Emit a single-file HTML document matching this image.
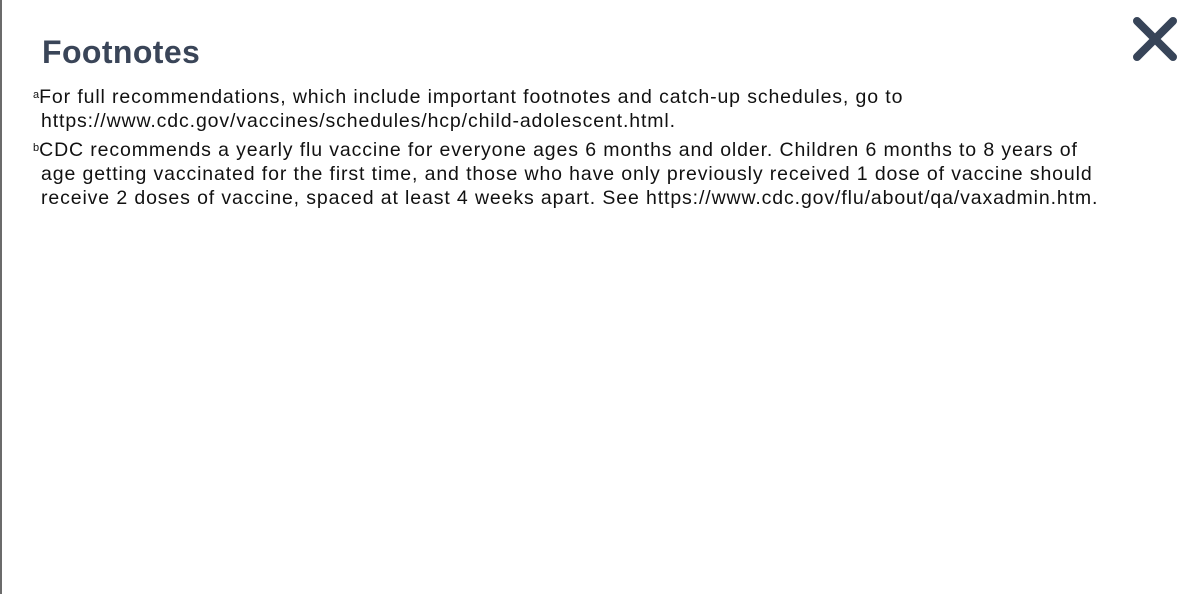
<!DOCTYPE html>
<html><head><style>
html,body{margin:0;padding:0;background:#fff;width:1196px;height:594px;overflow:hidden;}
body{border-left:2px solid #6b6b6b;box-sizing:border-box;position:relative;font-family:"Liberation Sans",sans-serif;}
h1{position:absolute;left:40px;top:34px;margin:0;font-size:32px;font-weight:bold;color:#3a4558;line-height:36px;letter-spacing:0.4px;}
.p{position:absolute;left:31px;margin:0;font-size:19.5px;line-height:24px;color:#111;width:1150px;letter-spacing:0.88px;white-space:nowrap;}
.p sup{font-size:11px;vertical-align:top;line-height:14px;position:relative;top:3px;letter-spacing:0;}
.ind{padding-left:8px;}
</style></head><body>
<h1>Footnotes</h1>
<div class="p" style="top:85px"><sup>a</sup>For full recommendations, which include important footnotes and catch-up schedules, go to<br><span class="ind">https://www.cdc.gov/vaccines/schedules/hcp/child-adolescent.html.</span></div>
<div class="p" style="top:138px"><sup>b</sup>CDC recommends a yearly flu vaccine for everyone ages 6 months and older. Children 6 months to 8 years of<br><span class="ind">age getting vaccinated for the first time, and those who have only previously received 1 dose of vaccine should</span><br><span class="ind">receive 2 doses of vaccine, spaced at least 4 weeks apart. See https://www.cdc.gov/flu/about/qa/vaxadmin.htm.</span></div>
<svg style="position:absolute;left:1128px;top:14px" width="50" height="50" viewBox="0 0 50 50"><path d="M7 7L43 43M43 7L7 43" stroke="#374458" stroke-width="8" stroke-linecap="round"/></svg>
</body></html>
